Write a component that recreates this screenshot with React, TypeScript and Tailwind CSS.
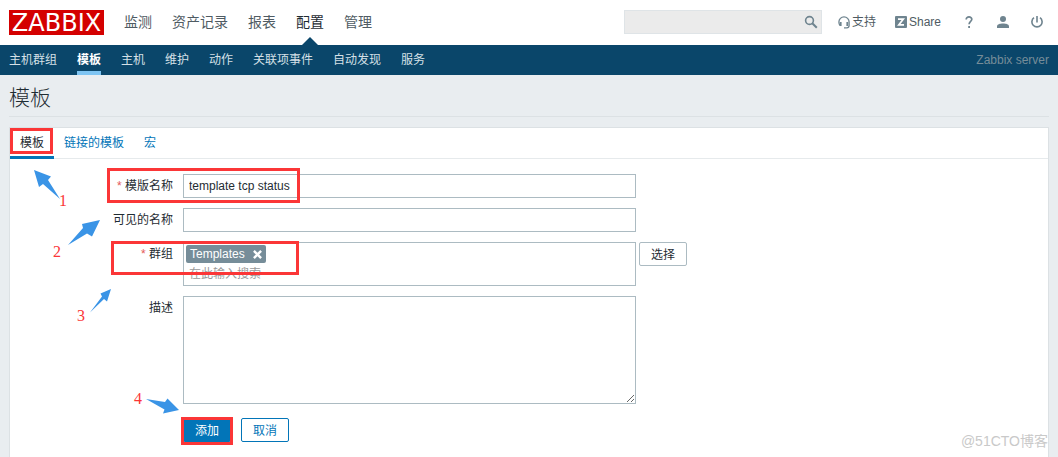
import { useState, type FormEvent } from 'react';

const mainMenu = ['监测', '资产记录', '报表', '配置', '管理'];

const subMenu = ['主机群组', '模板', '主机', '维护', '动作', '关联项事件', '自动发现', '服务'];

const tabs = ['模板', '链接的模板', '宏'];

function SearchIcon() {
  return (
    <svg viewBox="0 0 14 14" className="size-3.5" fill="none" stroke="#6f848f">
      <circle cx="5.5" cy="5.5" r="3.900" strokeWidth="1.6" />
      <path d="M8.300 8.300l4.500 4.500" strokeWidth="2" />
    </svg>
  );
}

function HeadsetIcon() {
  return (
    <svg viewBox="0 0 12 13" className="h-[13px] w-3" fill="none" stroke="#6f848f">
      <path d="M2 9.500C1.200 8.600.9 7.400.9 6a5 5 0 0 1 10.200 0v3.500c0 1.400-1 2.400-2.400 2.400H6" strokeWidth="1.300" />
      <path d="M2.700 6v4M9.300 6v4" strokeWidth="1.800" />
    </svg>
  );
}

function ShareIcon() {
  return (
    <svg viewBox="0 0 12 12" className="size-3">
      <rect width="12" height="12" rx="1" fill="#6f848f" />
      <path d="M3 3.200h5.200L3.900 8.800H9" fill="none" stroke="#fff" strokeWidth="1.800" />
    </svg>
  );
}

function HelpIcon() {
  return (
    <svg viewBox="0 0 8 12" className="h-3 w-2" fill="none" stroke="#6f848f" strokeWidth="1.700">
      <path d="M1.200 3.400C1.200 1.800 2.400.9 4 .9s2.800.9 2.800 2.400c0 2-2.700 2.200-2.700 4.900" />
      <path d="M3.200 11h1.800" strokeWidth="2" />
    </svg>
  );
}

function UserIcon() {
  return (
    <svg viewBox="0 0 12 12" className="size-3" fill="#6f848f">
      <circle cx="6" cy="3" r="3" />
      <path d="M0 12v-1.700C0 8.200 3 7.400 6 7.400s6 .8 6 2.900V12z" />
    </svg>
  );
}

function PowerIcon() {
  return (
    <svg viewBox="0 0 12 12" className="size-3" fill="none" stroke="#6f848f" strokeWidth="1.600">
      <path d="M6 0v6.500M3 1.700a5.100 5.100 0 1 0 6 0" />
    </svg>
  );
}

function Header() {
  return (
    <header className="flex h-[45px] items-center bg-white pr-[15px] pl-[9px]">
      <a
        href="#"
        className="flex h-[25px] w-[95px] items-center justify-center bg-[#d40000] font-['DejaVu_Sans',sans-serif] text-2xl leading-6 text-white"
      >
        ZABBIX
      </a>
      <nav className="ml-5 flex gap-5 self-stretch text-sm">
        {mainMenu.map((item) => (
          <a
            key={item}
            href="#"
            className={
              item === '配置'
                ? 'relative flex items-center pb-0.5 text-[#1f2c33]'
                : 'flex items-center pb-0.5 text-[#4f5b63]'
            }
          >
            {item}
            {item === '配置' ? (
              <svg viewBox="0 0 16 8" className="absolute bottom-0 left-1.5 h-2 w-4">
                <path d="M0 8l8-8 8 8z" fill="#0a466a" />
              </svg>
            ) : null}
          </a>
        ))}
      </nav>
      <div className="ml-auto flex items-center pb-px text-[#4f5b63]">
        <form className="relative" role="search">
          <input
            aria-label="Search"
            className="block h-6 w-[198px] border border-[#dfe4e7] bg-[#ebebeb] pr-6 pl-1 outline-none"
          />
          <button type="submit" aria-label="Search" className="absolute top-[5px] right-1">
            <SearchIcon />
          </button>
        </form>
        <a href="#" className="ml-4 flex items-center gap-0.5">
          <HeadsetIcon />
          支持
        </a>
        <a href="#" className="ml-[19px] flex items-center gap-0.5">
          <ShareIcon />
          Share
        </a>
        <a href="#" aria-label="Help" className="ml-6">
          <HelpIcon />
        </a>
        <a href="#" aria-label="User profile" className="ml-6">
          <UserIcon />
        </a>
        <a href="#" aria-label="Sign out" className="ml-[22px]">
          <PowerIcon />
        </a>
      </div>
    </header>
  );
}

function SubMenu() {
  return (
    <nav className="flex h-[30px] gap-5 bg-[#0a466a] px-[9px] text-[#d5e0e7]">
      {subMenu.map((item) => (
        <a
          key={item}
          href="#"
          className={
            item === '模板'
              ? 'relative flex items-center font-bold text-white'
              : 'flex items-center'
          }
        >
          {item}
          {item === '模板' ? <span className="absolute inset-x-0 bottom-0 h-1 bg-[#7ec4f2]" /> : null}
        </a>
      ))}
      <span className="ml-auto flex items-center text-[#768d99]">Zabbix server</span>
    </nav>
  );
}

function Mark({ className }: { className: string }) {
  return <span className={`pointer-events-none absolute border-3 border-[#fb3637] ${className}`} />;
}

function Step({ label, className }: { label: string; className: string }) {
  return (
    <span
      className={`absolute font-['Liberation_Serif',serif] text-base leading-4 text-[#fb3637] ${className}`}
    >
      {label}
    </span>
  );
}

function Arrows() {
  return (
    <svg
      viewBox="0 0 200 300"
      className="pointer-events-none absolute top-0 left-0 h-[300px] w-[200px]"
      fill="#3a94e6"
    >
      <path d="M24 42L41 48.500 38 52 50 71 33 56 29 59z" />
      <path d="M90 92L72 96 73 100 58 117 77 105.500 82 108.500z" />
      <path d="M101 161L90.500 165.500 92 168.500 80 184.500 94 171 97 173.500z" />
      <path d="M136 271L155 274 157.500 270.500 169 282 153 285.500 154.500 281.500z" />
    </svg>
  );
}

function Label({ htmlFor, required, children }: { htmlFor: string; required?: boolean; children: string }) {
  return (
    <label htmlFor={htmlFor} className="w-[163px] shrink-0 pt-[3px] text-right">
      {required ? <span className="text-[#e45959]">* </span> : null}
      {children}
    </label>
  );
}

export default function App() {
  const [name, setName] = useState('template tcp status');
  const [groups, setGroups] = useState(['Templates']);
  const [tab, setTab] = useState('模板');

  function handleSubmit(event: FormEvent<HTMLFormElement>) {
    event.preventDefault();
  }

  return (
    <div className="flex min-h-screen flex-col bg-[#e9edf0] font-['Liberation_Sans','Noto_Sans_CJK_SC',sans-serif] text-xs leading-[18px] text-[#1f2c33]">
      <Header />
      <SubMenu />
      <main className="flex grow flex-col px-[9px]">
        <h1 className="flex h-[42px] items-center border-b border-[#dce1e4] pt-1 text-[21px] font-light">
          模板
        </h1>
        <section className="relative mt-2.5 grow border border-b-0 border-[#dce1e4] bg-white">
          <div role="tablist" className="flex h-[31px] border-b border-[#e6eaec]">
            {tabs.map((item) => (
              <button
                key={item}
                type="button"
                role="tab"
                aria-selected={item === tab}
                onClick={() => setTab(item)}
                className={
                  item === tab
                    ? '-mb-px border-b-3 border-[#0275b8] px-2.5 pt-0.5'
                    : 'px-2.5 text-[#0275b8]'
                }
              >
                {item}
              </button>
            ))}
          </div>

          <form className="space-y-2.5 py-[15px]" onSubmit={handleSubmit}>
            <div className="flex gap-2.5">
              <Label htmlFor="name" required>
                模版名称
              </Label>
              <input
                id="name"
                className="h-6 w-[453px] border border-[#acbbc2] px-[5px]"
                value={name}
                onChange={(event) => setName(event.target.value)}
              />
            </div>
            <div className="flex gap-2.5">
              <Label htmlFor="visibleName">可见的名称</Label>
              <input id="visibleName" className="h-6 w-[453px] border border-[#acbbc2] px-[5px]" />
            </div>
            <div className="flex gap-2.5">
              <Label htmlFor="groups" required>
                群组
              </Label>
              <div className="flex items-start gap-[3px]">
                <div className="h-11 w-[453px] border border-[#acbbc2] px-0.5 pt-0.5">
                  <div className="flex h-[18px] gap-0.5">
                    {groups.map((group) => (
                      <span
                        key={group}
                        className="flex items-center gap-2 rounded-xs bg-[#768d99] pr-1 pl-1 text-white"
                      >
                        {group}
                        <button
                          type="button"
                          aria-label={`Remove ${group}`}
                          onClick={() => setGroups(groups.filter((entry) => entry !== group))}
                        >
                          <svg viewBox="0 0 9 9" className="size-[9px]" stroke="#fff" strokeWidth="2.400">
                            <path d="M.9.900l7.200 7.200M8.100.9L.9 8.100" />
                          </svg>
                        </button>
                      </span>
                    ))}
                  </div>
                  <input
                    id="groups"
                    className="block h-[22px] w-full px-[3px] outline-none placeholder:text-[#9a9a9a]"
                    placeholder="在此输入搜索"
                  />
                </div>
                <button type="button" className="h-6 w-12 rounded-xs border border-[#acbbc2] pt-px">
                  选择
                </button>
              </div>
            </div>
            <div className="flex gap-2.5">
              <Label htmlFor="description">描述</Label>
              <textarea
                id="description"
                className="h-[108px] w-[453px] border border-[#acbbc2] px-[5px] py-1"
              />
            </div>
            <div className="flex gap-2.5 pt-1 pl-[173px]">
              <button type="submit" className="h-6 w-12 rounded-xs bg-[#0275b8] pt-px text-white">
                添加
              </button>
              <button
                type="button"
                className="h-6 w-12 rounded-xs border border-[#0275b8] pt-px text-[#0275b8]"
              >
                取消
              </button>
            </div>
          </form>

          <Arrows />
          <Mark className="top-0 left-0 h-[26px] w-[43px]" />
          <Mark className="top-10 left-[97px] h-[35px] w-[193px]" />
          <Mark className="top-[113px] left-[101px] h-[34px] w-[188px]" />
          <Mark className="top-[289px] left-[171px] h-7 w-[52px]" />
          <Step label="1" className="top-[65px] left-[49px]" />
          <Step label="2" className="top-[116px] left-[43px]" />
          <Step label="3" className="top-[180px] left-[67px]" />
          <Step label="4" className="top-[263px] left-[124px]" />
          <span className="absolute right-0 bottom-1.5 text-sm text-[#c9c9c9]">@51CTO博客</span>
        </section>
      </main>
    </div>
  );
}
